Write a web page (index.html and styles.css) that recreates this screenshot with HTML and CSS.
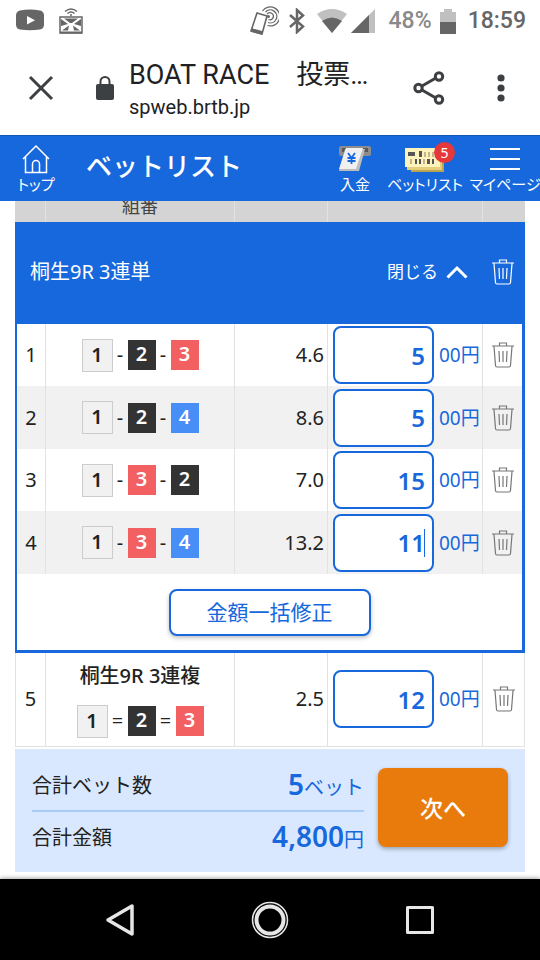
FILE: index.html
```html
<!DOCTYPE html>
<html lang="ja">
<head>
<meta charset="utf-8">
<meta name="viewport" content="width=device-width, initial-scale=1">
<title>BOAT RACE 投票</title>
<link rel="stylesheet" href="styles.css">
</head>
<body>
<svg class="defs" aria-hidden="true">
  <symbol id="trash" viewBox="0 0 22 26">
    <path d="M0 4H22M7.500 3.500V1H14.500V3.500M2 4.500L3.500 23.500Q3.600 25 5 25H17Q18.400 25 18.500 23.500L20 4.500M7 9L7.500 20M11 9V20M15 9L14.500 20" fill="none" stroke="currentColor" stroke-width="1.200"/>
  </symbol>
</svg>

<div class="status">
  <svg width="28" height="24" viewBox="0 0 28 24"><path d="M4 1.500Q14-.5 24 1.500Q27.500 2 28 6V16Q27.500 20 24 20.500Q14 22 4 20.500Q.5 20 0 16V6Q.5 2 4 1.500Z" fill="#666"/><path d="M11 7V15.500L19 11.200Z" fill="#fff"/></svg>
  <svg class="cast" width="24" height="28" viewBox="0 0 24 28" fill="none" stroke="#666" stroke-width="1.500"><path d="M6 4.500Q12-.5 18 4.500M8.500 6.500Q12 3.500 15.500 6.500"/><circle cx="12" cy="8" r="1" fill="#666" stroke="none"/><path d="M1 10H23V26H1Z"/><path d="M1 25.500H23" stroke-width="2"/><path d="M2 12L9 17L2 19ZM22 12L15 17L22 19ZM5 11.500H19L13 16H11ZM3 23.500L10 18.500L9 23.500ZM21 23.500L14 18.500L15 23.500Z" fill="#666" stroke="none"/></svg>
  <span class="spacer"></span>
  <svg width="30" height="30" viewBox="0 0 30 30" fill="none" stroke="#666" stroke-width="1.600"><path d="M8 7L18 10L13 28L2 25Z"/><path d="M2.500 24L13.500 27" stroke-width="3.500"/><path d="M16.500 6A6.500 6.500 0 1 1 19 16.500M18 8.200A3.500 3.500 0 1 1 19.500 13.500M13.500 5A9.500 9.500 0 1 1 18.500 19.500" stroke-width="1.300"/><circle cx="19.500" cy="10.500" r="1.500" fill="#666" stroke="none"/></svg>
  <svg class="bt" width="16" height="26" viewBox="0 0 16 26" fill="none" stroke="#666" stroke-width="2.500"><path d="M1 7L14 18.500L8 24V2L14 7.500L1 19"/></svg>
  <svg class="wifi" width="30" height="24" viewBox="0 0 30 24"><path d="M0 5Q15-5 30 5L15 24Z" fill="#c0c0c0"/><path d="M5 12Q15 5 25 12L15 24Z" fill="#666"/></svg>
  <svg class="signal" width="24" height="24" viewBox="0 0 24 24"><path d="M0 24L24 0V24Z" fill="#c0c0c0"/><path d="M0 24L18 6V24Z" fill="#666"/></svg>
  <span class="percent">48%</span>
  <svg class="battery" width="16" height="25" viewBox="0 0 16 25"><path d="M0 3H4V0H12V3H16V25H0Z" fill="#c0c0c0"/><path d="M0 13H16V25H0Z" fill="#666"/></svg>
  <span class="clock">18:59</span>
</div>

<div class="browser">
  <button class="close" aria-label="閉じる"><svg width="26" height="26" viewBox="0 0 26 26" stroke="#3c4043" stroke-width="3"><path d="M2 2L24 24M24 2L2 24"/></svg></button>
  <svg class="lock" width="18" height="24" viewBox="0 0 18 24"><rect y="8" width="18" height="16" rx="2" fill="#3c4043"/><path d="M4.500 9V5.500A4.500 4.500 0 0 1 13.500 5.500V9" fill="none" stroke="#3c4043" stroke-width="2"/></svg>
  <div class="page-id"><div class="page-title">BOAT RACE　投票…</div><div class="page-url">spweb.brtb.jp</div></div>
  <button aria-label="共有"><svg width="32" height="34" viewBox="0 0 32 34" fill="none" stroke="#3c4043" stroke-width="3"><path d="M9 15L22 7.500M9 19L22 26.500"/><circle cx="5.500" cy="17" r="3.700"/><circle cx="26" cy="5.500" r="3.700"/><circle cx="26" cy="28.500" r="3.700"/></svg></button>
  <button class="more" aria-label="メニュー"><svg width="8" height="28" viewBox="0 0 8 28" fill="#3c4043"><circle cx="4" cy="4" r="3.600"/><circle cx="4" cy="14" r="3.600"/><circle cx="4" cy="24" r="3.600"/></svg></button>
</div>

<header class="site-header">
  <a class="tool home" href="#"><svg width="28" height="30" viewBox="0 0 28 30" fill="none" stroke="#fff" stroke-width="1.500"><path d="M1 15L14 2L27 15M3.500 13V28.500H24.500V13M10.500 28V20A3.500 3.500 0 0 1 17.500 20V28"/></svg><span>トップ</span></a>
  <h1>ベットリスト</h1>
  <a class="tool deposit" href="#"><svg width="34" height="30" viewBox="0 0 34 30"><rect x="1" y="2" width="32" height="10" rx="2" fill="#8d8d8d"/><rect x="4" y="4" width="26" height="4" fill="#585858"/><path d="M7 5H27L21 27H1Z" fill="#bdbdbd"/><path d="M8 4H25L18 25H1Z" fill="#f0f0f0"/><path d="M10 9L13.500 14L17 9M13.500 14V20M9.500 14H17.500M9.500 17H17.500" fill="none" stroke="#1768dc" stroke-width="1.800"/></svg><span>入金</span></a>
  <a class="tool bets" href="#"><svg width="40" height="30" viewBox="0 0 40 30"><path d="M4 10H39V28H6V26H4Z" fill="#bfa450"/><path d="M2 6H37V26H2Z" fill="#e5cf7d"/><path d="M0 4H35V23H0Z" fill="#fff3bd"/><path d="M3 8H10V12H3ZM14 7H17V13H14ZM10 15H12V20H10ZM14 15H16V20H14ZM22 15H25V20H22ZM27 15H29V20H27Z" fill="#555"/><path d="M19 8H21V13H19ZM23 8H25V13H23ZM27 8H29V13H27ZM5 15H7V20H5ZM18 15H20V20H18Z" fill="#c3b68b"/></svg><b class="badge">5</b><span>ベットリスト</span></a>
  <a class="tool menu" href="#"><svg width="32" height="30" viewBox="0 0 32 30" stroke="#fff" stroke-width="2"><path d="M1 5H31M1 15H31M1 25H31"/></svg><span>マイページ</span></a>
</header>

<main>
  <div class="scroll">
  <table>
    <colgroup><col class="c-no"><col><col class="c-odds"><col class="c-amount"><col class="c-del"></colgroup>
    <thead><tr><th></th><th>組番</th><th></th><th></th><th></th></tr></thead>
    <tbody class="group">
      <tr><td class="group-head" colspan="5"><div><span class="name">桐生9R 3連単</span><button class="fold">閉じる<svg width="22" height="14" viewBox="0 0 22 14" fill="none" stroke="#fff" stroke-width="3"><path d="M1.500 12.500L11 3L20.500 12.500"/></svg></button><button class="del" aria-label="すべて削除"><svg><use href="#trash"/></svg></button></div></td></tr>
      <tr><td>1</td><td><div class="combo"><i class="n1">1</i><s>-</s><i class="n2">2</i><s>-</s><i class="n3">3</i></div></td><td class="odds">4.6</td><td><label class="amount"><span class="field"><input value="5" inputmode="numeric"></span>00円</label></td><td><button class="del" aria-label="削除"><svg><use href="#trash"/></svg></button></td></tr>
      <tr class="alt"><td>2</td><td><div class="combo"><i class="n1">1</i><s>-</s><i class="n2">2</i><s>-</s><i class="n4">4</i></div></td><td class="odds">8.6</td><td><label class="amount"><span class="field"><input value="5" inputmode="numeric"></span>00円</label></td><td><button class="del" aria-label="削除"><svg><use href="#trash"/></svg></button></td></tr>
      <tr><td>3</td><td><div class="combo"><i class="n1">1</i><s>-</s><i class="n3">3</i><s>-</s><i class="n2">2</i></div></td><td class="odds">7.0</td><td><label class="amount"><span class="field"><input value="15" inputmode="numeric"></span>00円</label></td><td><button class="del" aria-label="削除"><svg><use href="#trash"/></svg></button></td></tr>
      <tr class="alt"><td>4</td><td><div class="combo"><i class="n1">1</i><s>-</s><i class="n3">3</i><s>-</s><i class="n4">4</i></div></td><td class="odds">13.2</td><td><label class="amount"><span class="field editing"><input value="11" inputmode="numeric"></span>00円</label></td><td><button class="del" aria-label="削除"><svg><use href="#trash"/></svg></button></td></tr>
      <tr><td class="group-foot" colspan="5"><button class="bulk">金額一括修正</button></td></tr>
    </tbody>
    <tbody class="single">
      <tr><td>5</td><td><div class="race">桐生9R 3連複</div><div class="combo wide"><i class="n1">1</i><s>=</s><i class="n2">2</i><s>=</s><i class="n3">3</i></div></td><td class="odds">2.5</td><td><label class="amount"><span class="field"><input value="12" inputmode="numeric"></span>00円</label></td><td><button class="del" aria-label="削除"><svg><use href="#trash"/></svg></button></td></tr>
    </tbody>
  </table>
  </div>
  <section class="summary">
    <dl>
      <div><dt>合計ベット数</dt><dd><b>5</b>ベット</dd></div>
      <div><dt>合計金額</dt><dd><b>4,800</b>円</dd></div>
    </dl>
    <button class="next">次へ</button>
  </section>
</main>

<nav class="system">
  <button aria-label="戻る"><svg width="40" height="40" viewBox="0 0 40 40" fill="none" stroke="#e6e6e6" stroke-width="3.500" stroke-linejoin="round"><path d="M32 6V34L8 20Z"/></svg></button>
  <button aria-label="ホーム"><svg width="40" height="40" viewBox="0 0 40 40" fill="none" stroke="#e6e6e6"><circle cx="20" cy="20" r="17.500" stroke-width="1.500"/><circle cx="20" cy="20" r="13.500" stroke-width="4"/></svg></button>
  <button aria-label="最近"><svg width="40" height="40" viewBox="0 0 40 40" fill="none" stroke="#e6e6e6" stroke-width="3" stroke-linejoin="round"><path d="M7.500 7.500H32.500V32.500H7.500Z"/></svg></button>
</nav>
</body>
</html>
```

FILE: styles.css
```css
* { box-sizing: border-box; }
body {
  margin: 0;
  min-height: 100vh;
  display: flex;
  flex-direction: column;
  background: #fff;
  color: #222;
  font: 20px/30px "Noto Sans", "Noto Sans CJK JP", sans-serif;
}
button {
  padding: 0;
  border: 0;
  background: none;
  color: inherit;
  font: inherit;
}
svg { display: block; flex: none; }
.defs { position: absolute; width: 0; height: 0; }

/* Phone status bar */
.status {
  display: flex;
  align-items: center;
  height: 40px;
  padding: 2px 14px 0 16px;
  color: #666;
  font: 500 23px/28px Roboto, sans-serif;
}
.cast { margin-left: 15px; }
.spacer { flex: 1; }
.bt { margin-left: 10px; }
.wifi { margin-left: 12px; }
.signal { margin-left: 4px; }
.percent { margin-left: 14px; color: #8a8a8a; }
.battery { margin: 0 12px 0 8px; }

/* Browser bar */
.browser {
  display: flex;
  align-items: center;
  height: 95px;
  padding: 0 35px 0 28px;
  color: #202124;
  font-family: Roboto, "Noto Sans CJK JP", sans-serif;
}
.lock { margin-left: 42px; }
.page-id { flex: 1; margin-left: 15px; padding-top: 5px; white-space: nowrap; }
.page-title { font-size: 27px; line-height: 34px; }
.page-url { font-size: 20px; line-height: 30px; }
.more { margin-left: 52px; }

/* Site header */
.site-header {
  display: flex;
  align-items: center;
  height: 66px;
  background: #1768dc;
  border-top: 1px solid #1257b8;
  color: #fff;
}
h1 { flex: 1; margin: 0; padding-bottom: 6px; font-size: 26px; line-height: 36px; font-weight: 500; white-space: nowrap; }
.tool {
  position: relative;
  display: flex;
  flex-direction: column;
  align-items: center;
  color: inherit;
  font-size: 15px;
  line-height: 20px;
  font-feature-settings: "palt";
  text-decoration: none;
  white-space: nowrap;
}
.home { width: 72px; margin-right: 14px; }
.deposit { width: 50px; }
.bets { width: 90px; }
.menu { width: 70px; }
.badge {
  position: absolute;
  top: -2px;
  left: 54px;
  width: 21px;
  height: 21px;
  border-radius: 50%;
  background: #e5383b;
  font-size: 14px;
  line-height: 21px;
  font-weight: 400;
  text-align: center;
}

/* Bet table */
main { flex: 1; padding: 0 15px 7px; }
.scroll { overflow: hidden; }
table { width: 100%; margin-top: -20px; table-layout: fixed; border-spacing: 0; }
.c-no { width: 30px; }
.c-odds { width: 93px; }
.c-amount { width: 155px; }
.c-del { width: 43px; }
th {
  height: 41px;
  padding: 8px 0 0;
  background: #d4d4d4;
  color: #444;
  font-size: 18px;
  line-height: 20px;
  font-weight: 400;
}
th + th { border-left: 1px solid #e2e2e2; }
td { height: 62px; padding: 0; text-align: center; }
td + td { border-left: 1px solid #e2e2e2; }
.alt { background: #f1f1f1; }
.alt td { height: 63px; }
.group td:first-child { border-left: 2px solid #1768dc; }
.group td:last-child { border-right: 3px solid #1768dc; }
.group .group-head { height: 102px; background: #1768dc; color: #fff; }
.group-head div { display: flex; align-items: center; padding: 0 8px 2px 13px; }
.name { flex: 1; text-align: left; }
.fold { display: flex; align-items: center; gap: 8px; margin-right: 24px; font-size: 17px; }
.group .group-foot { height: 79px; border-bottom: 3px solid #1768dc; }
.bulk {
  width: 202px;
  height: 47px;
  border: 2px solid #1768dc;
  border-radius: 8px;
  box-shadow: 0 2px 4px rgba(0, 0, 0, .25);
  color: #1768dc;
  font-size: 21px;
  background: #fff;
}
.single td { height: 94px; padding-bottom: 1px; border-bottom: 1px solid #e2e2e2; }
.single td:first-child { border-left: 1px solid #e2e2e2; }
.single td:last-child { border-right: 1px solid #e2e2e2; }
.race { margin-bottom: 14px; font-weight: 500; }
.combo { display: flex; justify-content: center; align-items: center; }
.combo i {
  width: 28px;
  height: 30px;
  color: #fff;
  font-size: 20px;
  line-height: 28px;
  font-style: normal;
  font-weight: 600;
}
.combo .n1 { width: 31px; height: 33px; border: 1px solid #ccc; background: #f1f1f1; color: #222; line-height: 30px; }
.n2 { background: #333; }
.n3 { background: #f26061; }
.n4 { background: #478ff7; }
.combo s { width: 15px; line-height: 28px; text-decoration: none; }
.combo.wide s { width: 20px; }
td.odds { padding-right: 3px; text-align: right; }
.amount { display: flex; align-items: center; gap: 5px; padding-left: 5px; color: #1768dc; font-size: 19px; white-space: nowrap; }
.field { position: relative; display: flex; width: 101px; }
.field input {
  width: 100%;
  height: 58px;
  padding: 0 7px;
  border: 2px solid #1768dc;
  border-radius: 8px;
  background: #fff;
  color: #1768dc;
  font: 600 24px/30px "Noto Sans", sans-serif;
  text-align: right;
}
.editing::after {
  content: "";
  position: absolute;
  top: 15px;
  right: 9px;
  width: 1px;
  height: 28px;
  background: #1768dc;
}
.del { display: block; margin: 0 auto; color: #777; }
.del svg { width: 22px; height: 26px; }
.group-head .del { margin: 0; color: #fff; }

/* Totals */
.summary { display: flex; align-items: flex-start; gap: 14px; margin-top: 2px; padding: 12px 17px 9px; background: #d9e8ff; }
dl { flex: 1; margin: 0; }
dl div { display: flex; justify-content: space-between; align-items: center; height: 51px; }
dl div:first-child { border-bottom: 2px solid #a9ccf7; }
dd { margin: 0; color: #1768dc; }
dd b { font-size: 28px; font-weight: 600; }
.next {
  width: 130px;
  height: 79px;
  margin-top: 7px;
  border-radius: 8px;
  background: #e87b0c;
  box-shadow: 0 2px 4px rgba(0, 0, 0, .3);
  color: #fff;
  font-size: 23px;
  font-weight: 500;
}

/* Phone navigation keys */
.system {
  position: relative;
  display: flex;
  justify-content: center;
  gap: 110px;
  height: 81px;
  align-items: center;
  background: #000;
  box-shadow: 0 -1px 4px rgba(0, 0, 0, .35);
}
```
